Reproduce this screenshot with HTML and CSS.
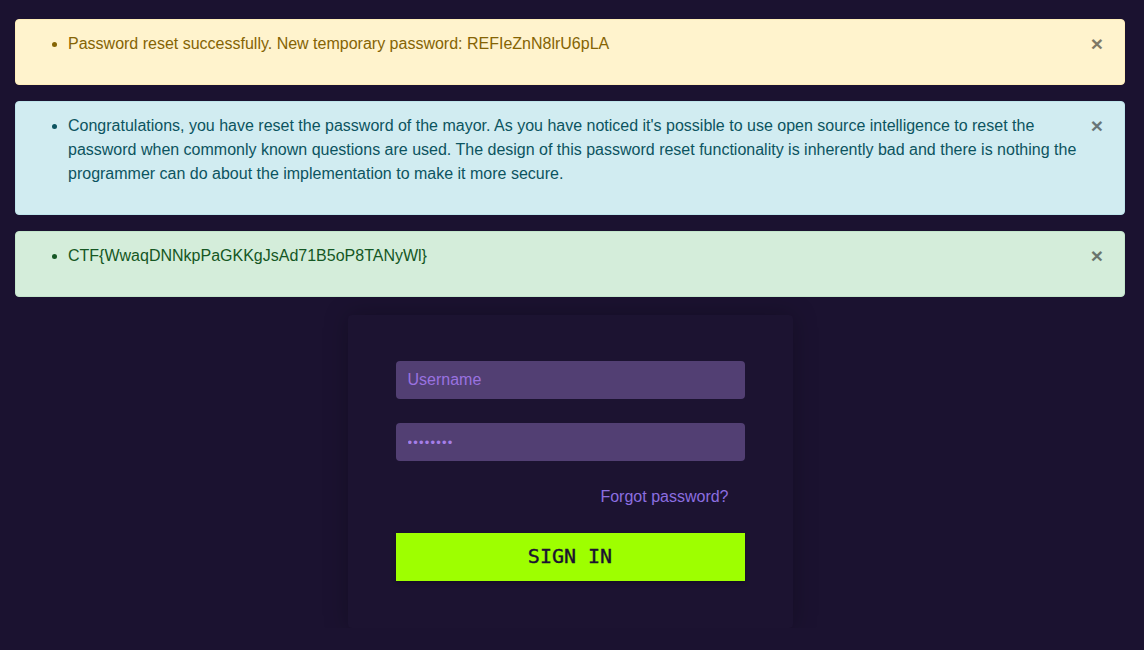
FILE: index.html
```html
<!DOCTYPE html>
<html lang="en">
<head>
<meta charset="utf-8">
<title>Sign in</title>
<link rel="stylesheet" href="styles.css">
</head>
<body>
<div class="page">
  <div class="alert alert-warning">
    <ul><li>Password reset successfully. New temporary password: REFIeZnN8lrU6pLA</li></ul>
    <button class="close" type="button">&times;</button>
  </div>
  <div class="alert alert-info">
    <ul><li>Congratulations, you have reset the password of the mayor. As you have noticed it's possible to use open source intelligence to reset the password when commonly known questions are used. The design of this password reset functionality is inherently bad and there is nothing the programmer can do about the implementation to make it more secure.</li></ul>
    <button class="close" type="button">&times;</button>
  </div>
  <div class="alert alert-success">
    <ul><li>CTF{WwaqDNNkpPaGKKgJsAd71B5oP8TANyWl}</li></ul>
    <button class="close" type="button">&times;</button>
  </div>

  <form class="card">
    <input class="field" type="text" placeholder="Username">
    <input class="field" type="password" value="password">
    <a class="forgot" href="#">Forgot password?</a>
    <button class="signin" type="button">SIGN IN</button>
  </form>
</div>
</body>
</html>
```
FILE: styles.css
```css
html, body {
  margin: 0;
  padding: 0;
  background: #1b1230;
  font-family: "Liberation Sans", Arial, sans-serif;
  font-size: 16px;
  line-height: 24px;
}

.page {
  padding: 19px 19px 0 15px;
  display: flex;
  flex-direction: column;
  align-items: stretch;
}

.alert {
  position: relative;
  border: 1px solid transparent;
  border-radius: 4px;
  padding: 12px 44px 12px 20px;
  margin-bottom: 16px;
}

.alert ul {
  margin: 0 0 16px 0;
  padding-left: 32px;
}

.alert-warning {
  background: #fff3cd;
  border-color: #ffeeba;
  color: #856404;
}

.alert-info {
  background: #d1ecf1;
  border-color: #bee5eb;
  color: #0c5460;
}

.alert-success {
  background: #d4edda;
  border-color: #c3e6cb;
  color: #155724;
}

.close {
  position: absolute;
  top: 0;
  right: 0;
  padding: 12px 21px;
  background: none;
  border: 0;
  font-family: "Liberation Sans", Arial, sans-serif;
  font-size: 21px;
  font-weight: 700;
  line-height: 24px;
  color: #000;
  opacity: 0.5;
  cursor: pointer;
}

.card {
  align-self: center;
  margin: 2px 0 0 0;
  width: 349px;
  padding: 46px 48px 47px 48px;
  background: #1c1331;
  border-radius: 4px;
  box-shadow: 0 0 24px rgba(0, 0, 0, 0.25);
  display: flex;
  flex-direction: column;
  gap: 24px;
}

.field {
  box-sizing: border-box;
  height: 38px;
  width: 100%;
  border: 0;
  border-radius: 4px;
  background: #523f73;
  color: #a57ee8;
  padding: 0 12px;
  font-family: "Liberation Sans", Arial, sans-serif;
  font-size: 16px;
  outline: none;
}

.field::placeholder {
  color: #9a72e0;
}

.field[type="password"] {
  font-size: 13px;
  letter-spacing: 1.2px;
}

.forgot {
  align-self: flex-end;
  margin-right: 16px;
  color: #8c6ee0;
  text-decoration: none;
  font-size: 16px;
  line-height: 24px;
}

.signin {
  height: 48px;
  width: 100%;
  border: 0;
  padding: 0 0 3px 0;
  background: #9eff00;
  color: #1b1230;
  font-family: "DejaVu Sans Mono", "Liberation Mono", monospace;
  font-size: 20px;
  font-weight: 400;
  letter-spacing: 0;
  -webkit-text-stroke: 0.4px #1b1230;
  box-shadow: 0 2px 4px rgba(0, 0, 0, 0.25);
  cursor: pointer;
}
```
